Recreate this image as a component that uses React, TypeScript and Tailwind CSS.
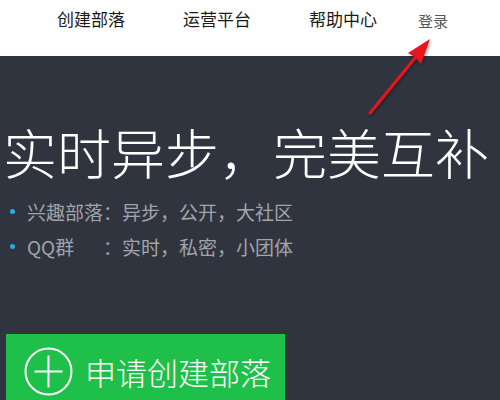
import React from "react";

export default function App() {
  return (
    <div className="relative w-[500px] h-[400px] overflow-hidden bg-[#30343f] font-['Noto_Sans_CJK_SC','Noto_Sans',sans-serif]">
      <header className="h-[56px] bg-white">
        <nav className="flex items-center h-[37px] pl-[57px]">
          <a className="text-[17px] leading-none text-[#1a1a1a]">创建部落</a>
          <a className="ml-[58px] text-[17px] leading-none text-[#1a1a1a]">运营平台</a>
          <a className="ml-[58px] text-[17px] leading-none text-[#1a1a1a]">帮助中心</a>
          <a className="ml-[41px] mt-[3px] text-[15px] leading-none text-[#555]">登录</a>
        </nav>
      </header>

      <section className="flex flex-col">
        <h1 className="mt-[69px] pl-[3px] text-[54px] leading-none font-light text-white whitespace-nowrap font-['Noto_Sans_CJK_SC_Light','Noto_Sans_CJK_SC_DemiLight','Noto_Sans_CJK_SC',sans-serif]">
          实时异步，完美互补
        </h1>
        <ul className="mt-[15px] flex flex-col text-[19px] leading-[35px] text-[#a0a4ab]">
          <li className="flex items-center">
            <span className="ml-[10px] w-[5px] h-[5px] rounded-full bg-[#22aee8]" />
            <span className="ml-[12px]">兴趣部落：异步，公开，大社区</span>
          </li>
          <li className="flex items-center">
            <span className="ml-[10px] w-[5px] h-[5px] rounded-full bg-[#22aee8]" />
            <span className="ml-[12px] inline-block w-[76px]">QQ群</span>
            <span>：实时，私密，小团体</span>
          </li>
        </ul>
        <button className="mt-[70px] ml-[6px] w-[279px] h-[72px] bg-[#1fc04a] flex items-start pt-[13px] pl-[18px] text-white">
          <svg width="49" height="49" viewBox="0 0 49 49" fill="none" stroke="white" strokeWidth="2">
            <circle cx="24.5" cy="24.5" r="23" />
            <line x1="10.5" y1="24.5" x2="38.5" y2="24.5" />
            <line x1="24.5" y1="8.5" x2="24.5" y2="40.5" />
          </svg>
          <span className="ml-[12px] mt-[9px] text-[31px] leading-none font-light font-['Noto_Sans_CJK_SC_Light','Noto_Sans_CJK_SC_DemiLight','Noto_Sans_CJK_SC',sans-serif]">
            申请创建部落
          </span>
        </button>
      </section>

      <svg
        className="absolute left-0 top-0 pointer-events-none"
        width="500"
        height="400"
        viewBox="0 0 500 400"
      >
        <defs>
          <filter id="sh" x="-20%" y="-20%" width="140%" height="140%">
            <feDropShadow dx="1" dy="2" stdDeviation="1.5" floodColor="#000" floodOpacity="0.35" />
          </filter>
        </defs>
        <g filter="url(#sh)">
          <line x1="370" y1="113" x2="415" y2="58" stroke="#e8141a" strokeWidth="3" strokeLinecap="round" />
          <polygon points="430,39 421,64 415,57 408,53" fill="#e8141a" />
        </g>
      </svg>
    </div>
  );
}
